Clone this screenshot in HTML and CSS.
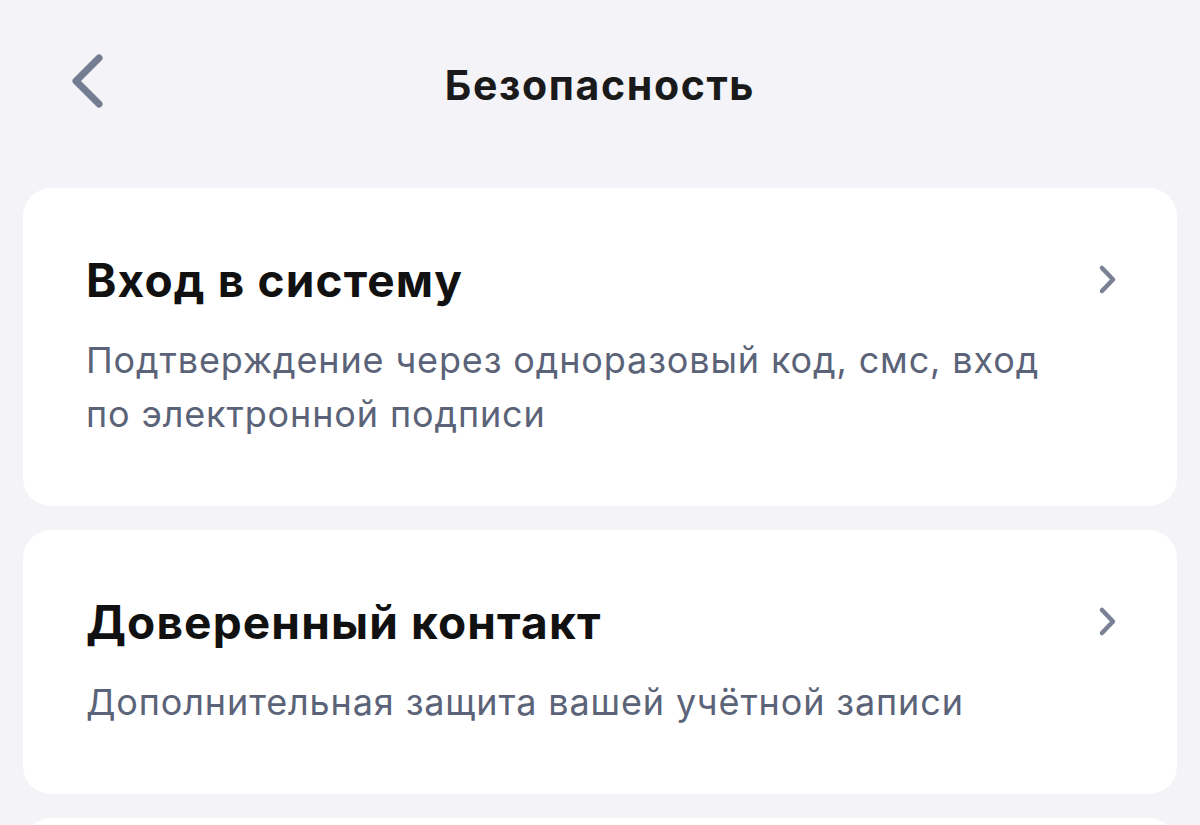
FILE: index.html
```html
<!DOCTYPE html>
<html lang="ru">
<head>
<meta charset="utf-8">
<title>Безопасность</title>
<link rel="stylesheet" href="styles.css">
</head>
<body>
<div class="screen">
  <header class="topbar">
    <button class="back" aria-label="Назад">
      <svg width="40" height="56" viewBox="0 0 40 56"><path d="M31 4 L8 27 L31 50" fill="none" stroke="#737c90" stroke-width="7" stroke-linecap="round" stroke-linejoin="round"/></svg>
    </button>
    <h1 class="title">Безопасность</h1>
  </header>
  <main class="list">
    <section class="card">
      <div class="card-head">
        <h2 class="card-title">Вход в систему</h2>
        <svg class="chev" width="22" height="32" viewBox="0 0 22 32"><path d="M5 4 L16 15.5 L5 27" fill="none" stroke="#7a8194" stroke-width="4.5" stroke-linecap="round" stroke-linejoin="round"/></svg>
      </div>
      <p class="card-sub">Подтверждение через одноразовый код, смс, вход по электронной подписи</p>
    </section>
    <section class="card">
      <div class="card-head">
        <h2 class="card-title">Доверенный контакт</h2>
        <svg class="chev" width="22" height="32" viewBox="0 0 22 32"><path d="M5 4 L16 15.5 L5 27" fill="none" stroke="#7a8194" stroke-width="4.5" stroke-linecap="round" stroke-linejoin="round"/></svg>
      </div>
      <p class="card-sub">Дополнительная защита вашей учётной записи</p>
    </section>
    <section class="card card-partial"></section>
  </main>
</div>
</body>
</html>
```
FILE: styles.css
```css
* { box-sizing: border-box; }
html, body { margin: 0; padding: 0; }
body {
  background: #f3f3f8;
  font-family: Inter, "Liberation Sans", sans-serif;
  color: #111;
  height: 825px;
  overflow: hidden;
}
.screen { width: 1200px; }
.topbar {
  position: relative;
  height: 188px;
  display: flex;
  justify-content: center;
  padding-top: 59px;
}
.back {
  position: absolute;
  left: 68px;
  top: 54px;
  background: none;
  border: 0;
  padding: 0;
  cursor: pointer;
}
.back svg { display: block; }
.title {
  margin: 0;
  font-size: 41px;
  line-height: 52px;
  font-weight: 700;
  letter-spacing: 0.04em;
  color: #1a1a1a;
}
.list {
  display: flex;
  flex-direction: column;
  gap: 24px;
  padding: 0 23px;
}
.card {
  background: #fff;
  border-radius: 28px;
  padding: 66px 58px 65px 63px;
}
.card-head {
  display: flex;
  align-items: center;
  justify-content: space-between;
}
.card-title {
  margin: 0;
  font-size: 46px;
  line-height: 52px;
  font-weight: 700;
  letter-spacing: 0.025em;
  color: #111;
}
.chev { display: block; flex: none; }
.card-sub {
  margin: 27px 0 0;
  max-width: 980px;
  font-size: 36px;
  line-height: 54px;
  letter-spacing: 0.024em;
  color: #5b6378;
}
.card-partial { height: 60px; padding: 0; }
```
